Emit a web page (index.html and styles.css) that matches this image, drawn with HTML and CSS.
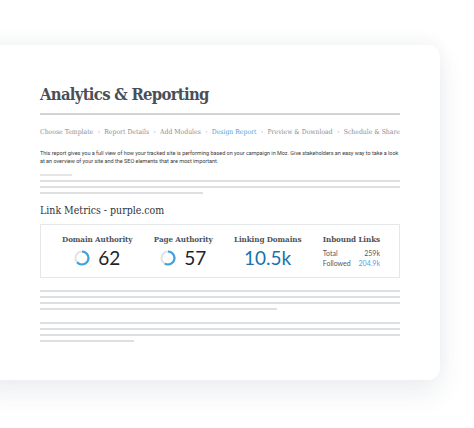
FILE: index.html
```html
<!DOCTYPE html>
<html>
<head>
<meta charset="utf-8">
<link rel="stylesheet" href="styles.css">
</head>
<body>
<div class="stage">
  <div class="card">
    <h1 class="title">Analytics &amp; Reporting</h1>
    <div class="divider"></div>
    <nav class="crumbs">
      <span>Choose Template</span><span class="sep">›</span>
      <span>Report Details</span><span class="sep">›</span>
      <span>Add Modules</span><span class="sep">›</span>
      <span class="active">Design Report</span><span class="sep">›</span>
      <span>Preview &amp; Download</span><span class="sep">›</span>
      <span>Schedule &amp; Share</span>
    </nav>
    <p class="intro">This report gives you a full view of how your tracked site is performing based on your campaign in Moz. Give stakeholders an easy way to take a look at an overview of your site and the SEO elements that are most important.</p>
    <div class="skel skel-top">
      <div class="line short light"></div>
      <div class="line"></div>
      <div class="line"></div>
      <div class="line half"></div>
    </div>
    <h2 class="subtitle">Link Metrics - purple.com</h2>
    <div class="metrics">
      <div class="metric">
        <div class="label">Domain Authority</div>
        <div class="value">
          <svg class="ring" viewBox="0 0 16 16"><circle cx="8" cy="8" r="6.5" class="track"/><circle cx="8" cy="8" r="6.5" class="arc" stroke-dasharray="25.3 40.8" transform="rotate(-90 8 8)"/></svg>
          <span class="num">62</span>
        </div>
      </div>
      <div class="metric">
        <div class="label">Page Authority</div>
        <div class="value">
          <svg class="ring" viewBox="0 0 16 16"><circle cx="8" cy="8" r="6.5" class="track"/><circle cx="8" cy="8" r="6.5" class="arc" stroke-dasharray="23.3 40.8" transform="rotate(-90 8 8)"/></svg>
          <span class="num">57</span>
        </div>
      </div>
      <div class="metric">
        <div class="label">Linking Domains</div>
        <div class="value"><span class="num big">10.5k</span></div>
      </div>
      <div class="metric inbound">
        <div class="label">Inbound Links</div>
        <div class="rows">
          <div class="row"><span>Total</span><span>259k</span></div>
          <div class="row"><span>Followed</span><span class="blue">204.9k</span></div>
        </div>
      </div>
    </div>
    <div class="skel skel-a">
      <div class="line"></div>
      <div class="line"></div>
      <div class="line"></div>
      <div class="line w2"></div>
    </div>
    <div class="skel skel-b">
      <div class="line"></div>
      <div class="line"></div>
      <div class="line"></div>
      <div class="line w3"></div>
    </div>
  </div>
</div>
</body>
</html>
```

FILE: styles.css
```css
html, body {
  margin: 0;
  padding: 0;
  background: #ffffff;
}
body {
  width: 474px;
  height: 428px;
  overflow: hidden;
  font-family: Roboto, "Liberation Sans", sans-serif;
}
.stage {
  padding-top: 45px;
}
.card {
  margin-left: -20px;
  width: 460px;
  height: 335px;
  box-sizing: border-box;
  padding: 39px 40px 0 60px;
  background: #fff;
  border-radius: 0 12px 12px 0;
  box-shadow: 0 12px 28px rgba(30, 50, 90, 0.09), 0 -6px 16px rgba(30, 50, 90, 0.035);
}
.title {
  margin: 0;
  font-family: "DejaVu Serif Condensed", "DejaVu Serif", serif;
  font-weight: bold;
  font-size: 16.5px;
  line-height: 21px;
  color: #4a4f57;
  letter-spacing: -0.7px;
  font-stretch: condensed;
}
.divider {
  margin-top: 8px;
  height: 1.5px;
  background: #d3d3d3;
}
.crumbs {
  margin-top: 12px;
  display: flex;
  justify-content: space-between;
  align-items: center;
  font-family: "DejaVu Serif Condensed", "DejaVu Serif", serif;
  font-size: 6.8px;
  line-height: 10px;
  color: #8a8e93;
  font-stretch: condensed;
}
.crumbs .sep {
  font-size: 7px;
  color: #a8acb0;
}
.crumbs .active {
  color: #4aa3dd;
}
.intro {
  margin: 12px 0 0;
  font-family: Roboto, "Liberation Sans", sans-serif;
  font-size: 5.5px;
  line-height: 8.3px;
  letter-spacing: -0.02px;
  color: #3a3a3a;
}
.skel .line {
  height: 2px;
  background: #dedfe0;
  margin-top: 4px;
}
.skel .line.short {
  width: 32px;
  background: #e4e5e6;
}
.skel .line.half {
  width: 163px;
}
.skel .line.w2 {
  width: 237px;
}
.skel .line.w3 {
  width: 94px;
}
.skel-top {
  margin-top: 9px;
}
.skel-top .line:first-child {
  margin-top: 0;
}
.subtitle {
  margin: 9px 0 0;
  font-family: "DejaVu Serif Condensed", "DejaVu Serif", serif;
  font-weight: normal;
  font-size: 10.5px;
  line-height: 14px;
  color: #2f3338;
  font-stretch: condensed;
}
.metrics {
  margin-top: 7px;
  height: 54px;
  box-sizing: border-box;
  border: 1px solid #e6e7e8;
  display: flex;
  justify-content: space-between;
  padding: 8px 19px 0 21px;
}
.metric {
  display: flex;
  flex-direction: column;
  align-items: center;
}
.label {
  font-family: "DejaVu Serif Condensed", "DejaVu Serif", serif;
  font-weight: bold;
  font-size: 8px;
  line-height: 12px;
  color: #4e535a;
  font-stretch: condensed;
  letter-spacing: -0.1px;
}
.value {
  display: flex;
  align-items: center;
  gap: 8px;
  margin-top: 2px;
  height: 22px;
}
.ring {
  width: 16px;
  height: 16px;
}
.ring circle {
  fill: none;
  stroke-width: 2.2;
}
.ring .track {
  stroke: #e2e4e6;
}
.ring .arc {
  stroke: #3fa2dc;
}
.num {
  font-family: Lato, Roboto, sans-serif;
  font-size: 19px;
  line-height: 22px;
  color: #1f2328;
}
.num.big {
  color: #1a72aa;
  font-size: 19px;
}
.inbound {
  align-items: stretch;
}
.rows {
  margin-top: 3px;
  font-family: Lato, Roboto, sans-serif;
  font-size: 7px;
  line-height: 10px;
  color: #555a60;
}
.row {
  display: flex;
  justify-content: space-between;
}
.blue {
  color: #4aa8e0;
}
.skel-a {
  margin-top: 12px;
}
.skel-b {
  margin-top: 12px;
}
```
